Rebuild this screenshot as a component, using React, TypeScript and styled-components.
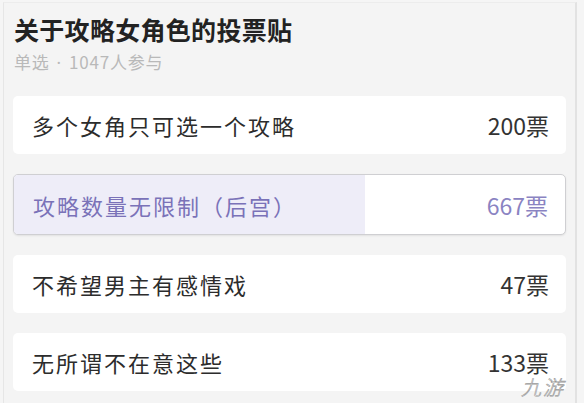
import React, { FC } from 'react'
import styled, { createGlobalStyle } from 'styled-components'

const GlobalStyle = createGlobalStyle`
    html, body {
        margin: 0;
        padding: 0;
        background: #f5f5f5;
    }
    body {
        font-family: "Noto Sans CJK SC", "Noto Sans", sans-serif;
    }
`

type Option = {
    label: string
    votes: number
    selected?: boolean
}

const options: Option[] = [
    { label: '多个女角只可选一个攻略', votes: 200 },
    { label: '攻略数量无限制（后宫）', votes: 667, selected: true },
    { label: '不希望男主有感情戏', votes: 47 },
    { label: '无所谓不在意这些', votes: 133 },
]

const total = 1047

const App: FC = () => {
    return (
        <>
            <GlobalStyle />
            <Frame>
                <Title>关于攻略女角色的投票贴</Title>
                <Meta>单选<Dot>·</Dot>{total}人参与</Meta>
                <List>
                    {options.map((o) => (
                        <Card key={o.label} $selected={!!o.selected}>
                            {o.selected && (
                                <Fill style={{ width: `${(o.votes / total) * 100}%` }} />
                            )}
                            <Label $selected={!!o.selected}>{o.label}</Label>
                            <Votes $selected={!!o.selected}>{o.votes}票</Votes>
                        </Card>
                    ))}
                </List>
                <Watermark>九游</Watermark>
            </Frame>
        </>
    )
}

const Frame = styled.div`
    position: relative;
    margin: 2px 0 0 3px;
    width: 574px;
    height: 401px;
    box-sizing: border-box;
    border-top: 1px solid #ececec;
    border-left: 1px solid #e6e6e6;
    border-right: 2px solid #e2e2e2;
    padding: 11px 9px 0 9px;
    background: #f4f4f4;
    overflow: hidden;
`
const Title = styled.div`
    font-size: 25px;
    line-height: 30px;
    font-weight: 700;
    letter-spacing: 0.3px;
    color: #222;
    padding-left: 1px;
`
const Meta = styled.div`
    margin-top: 7px;
    font-size: 17px;
    line-height: 22px;
    letter-spacing: 0.8px;
    color: #b9b9b9;
    padding-left: 1px;
`
const Dot = styled.span`
    font-family: "Noto Sans", sans-serif;
    margin: 0 7px;
`
const List = styled.div`
    margin-top: 22px;
    display: flex;
    flex-direction: column;
    gap: 20px;
`
const Card = styled.div<{ $selected: boolean }>`
    position: relative;
    height: ${(p) => (p.$selected ? '61px' : '58px')};
    box-sizing: border-box;
    display: flex;
    align-items: center;
    justify-content: space-between;
    padding: 0 17px 0 19px;
    background: #fff;
    border-radius: 5px;
    overflow: hidden;
    border: ${(p) => (p.$selected ? '1.5px solid #cfcfd2' : 'none')};
    box-shadow: ${(p) => (p.$selected ? '0 1px 2px rgba(0,0,0,0.08)' : 'none')};
`
const Fill = styled.div`
    position: absolute;
    left: 0;
    top: 0;
    bottom: 0;
    background: #eeedf8;
`
const Label = styled.span<{ $selected: boolean }>`
    position: relative;
    font-size: 22px;
    letter-spacing: 2px;
    color: ${(p) => (p.$selected ? '#7a72b8' : '#2c2c2c')};
`
const Votes = styled.span<{ $selected: boolean }>`
    position: relative;
    font-size: 23px;
    font-weight: 400;
    color: ${(p) => (p.$selected ? '#8a83c2' : '#333')};
`
const Watermark = styled.div`
    position: absolute;
    right: 10px;
    bottom: 2px;
    font-size: 20px;
    font-weight: 300;
    font-style: italic;
    color: rgba(255, 255, 255, 0.8);
    -webkit-text-stroke: 0.6px #999;
    letter-spacing: 2px;
`

export default App
